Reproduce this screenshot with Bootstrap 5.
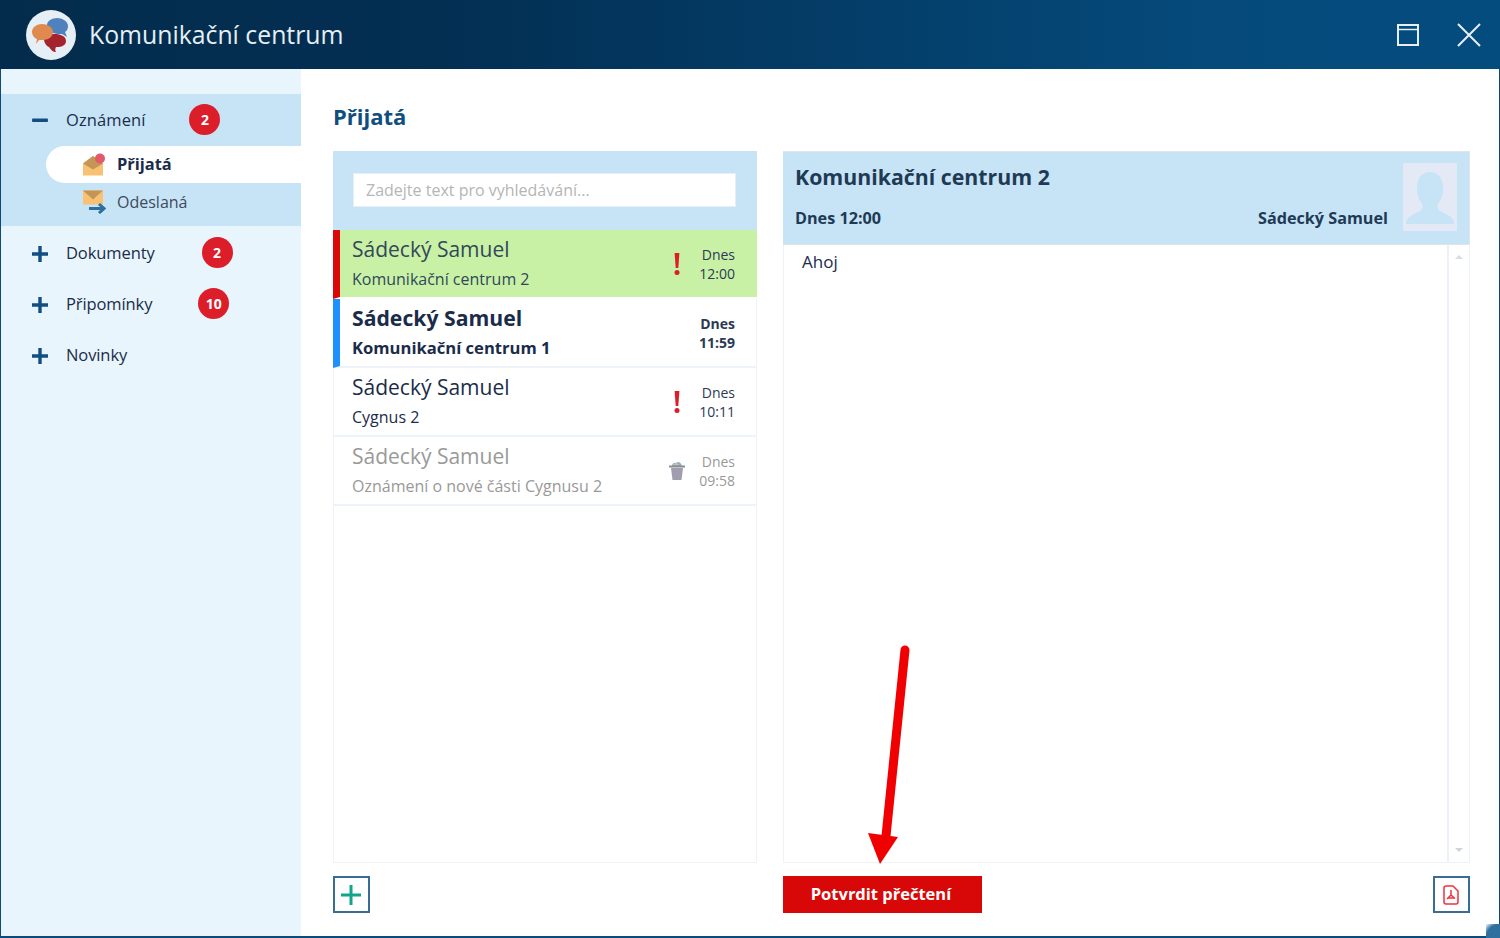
<!DOCTYPE html>
<html lang="cs">
<head>
<meta charset="utf-8">
<title>Komunikační centrum</title>
<link href="https://cdn.jsdelivr.net/npm/bootstrap@5.3.0/dist/css/bootstrap.min.css" rel="stylesheet">
<style>
html,body{height:938px;overflow:hidden;background:#fff}
body{font-family:"Open Sans",sans-serif;color:#1a2c4a;font-size:16px}
.kc-win{width:1500px;height:938px;position:relative;border:solid #0c4a78;border-width:0 1px 2px 1px}
.kc-head{height:69px;margin:0 -1px;background:linear-gradient(90deg,#032c4c 0%,#032f53 30%,#054a7b 80%,#054c7e 100%);padding-left:26px;padding-right:19px}
.kc-logo{width:50px;height:50px;border-radius:50%;background:#e6eff6;flex:none}
.kc-title{font-size:24.8px;margin-left:13px;line-height:1;color:#e6eff6}
.kc-ctl{display:block}
.kc-gap{margin-right:38px}
.kc-body{height:867px}
.kc-side{width:300px;background:#e9f5fc;padding-top:25px;flex:none}
.kc-sec{background:#c6e4f6;height:132px;padding-top:6px;margin-bottom:2px}
.kc-row{height:40px;margin-bottom:6px;padding-left:30px;font-size:16.5px;letter-spacing:.1px}
.kc-lbl{margin-left:17px}
.kc-pm{width:18px;flex:none;display:block}
.kc-badge{width:31px;height:31px;border-radius:50%;background:#dc1e2b;color:#fff;font-weight:700;font-size:14px;flex:none;margin-top:-2px;letter-spacing:0}
.kc-sub{height:37px;margin-left:45px;padding-left:36px;font-size:16px;color:#3f4a5e}
.kc-sub.kc-on{background:#fff;border-radius:19px 0 0 19px;color:#1a2c4a;font-weight:700;font-size:16.4px;line-height:24px}
.kc-sub.kc-on span{margin-top:-2px}
.kc-sub svg{flex:none;margin-right:11px}
.kc-plain{height:51px;padding-left:30px;font-size:16.5px;letter-spacing:-.1px}
.kc-b1{margin-left:44px}.kc-b2{margin-left:47px}.kc-b3{margin-left:46px}
.kc-main{padding:34px 30px 0 32px;min-width:0}
.kc-h{font-size:22px;font-weight:700;color:#0f4f80;line-height:26px;margin-bottom:22px}
.kc-cols{gap:26px}
.kc-left{width:424px;flex:none}
.kc-right{width:687px;flex:none}
.kc-panel{height:712px;border:1px solid #eef2f9;border-top:0}
.kc-search{height:79px;background:#c6e4f6;margin:0 -1px;padding:22px 21px 0 20px}
.kc-input{height:34px;width:100%;background:#fff;border:1px solid #e6eef6;border-radius:0;font-size:16px;padding:0 12px;box-shadow:none}
.kc-input::placeholder{color:#b5b5b5;opacity:1}
.kc-item{height:69px;border-bottom:2px solid #eef3fa;margin:0 -1px;padding:0 22px 0 19px;position:relative;border-left:7px solid transparent}
.kc-item.kc-g{background:#c8f1a6;border-left-color:#dc0808;border-bottom-color:#fff;padding-left:12px}
.kc-item.kc-n{border-left-color:#1e90ff;padding-left:12px}
.kc-item.kc-nb{border-left:0}
.kc-tx{margin-top:-3px}
.kc-nm{font-size:21px;line-height:26px;white-space:nowrap}
.kc-sb{font-size:16px;line-height:20px;margin-top:7px;white-space:nowrap}
.kc-item.kc-n .kc-nm{font-weight:700;font-size:21.2px}
.kc-item.kc-n .kc-sb{font-weight:700;font-size:16.6px}
.kc-item.kc-n .kc-tm{font-weight:700}
.kc-item.kc-g .kc-nm,.kc-item.kc-g .kc-sb{color:#33475a}
.kc-item.kc-d .kc-nm,.kc-item.kc-d .kc-sb,.kc-item.kc-d .kc-tm{color:#999}
.kc-tm{font-size:14px;line-height:19px;text-align:right;width:36px;flex:none;color:#2b3a55}
.kc-ic{width:30px;flex:none;margin-right:7px;text-align:center;display:flex;justify-content:center}
.kc-bar{height:37px;margin-top:13px}
.kc-sq{width:37px;height:37px;border:2px solid #3a6d96;border-radius:0;padding:0;background:#fff}
.kc-sq svg{margin-right:1px}
.kc-red{width:199px;height:37px;background:#d90808;color:#fff;font-weight:700;font-size:16.5px;border-radius:0;border:0;padding:0 3px 0 0}
.kc-red:hover{background:#d90808;color:#fff}
.kc-mh{height:94px;background:#c6e4f6;margin:0 -1px;padding:0 12px 0 12px;border:solid #dfe5ea;border-width:1px 1px 1px 0}
.kc-mt{font-size:21.3px;font-weight:700;color:#1f3a55;line-height:26px;margin-top:12px}
.kc-mi{font-size:16.2px;font-weight:700;line-height:20px;color:#1f3a55;margin-top:18px}
.kc-av{width:54px;height:68px;flex:none;background:#e4eaf5;margin-top:11px;margin-left:15px;display:block}
.kc-mb{height:617px}
.kc-txt{padding:5px 18px;font-size:17px;line-height:24px}
.kc-sc{width:22px;flex:none;border-left:2px solid #eef2f8;position:relative}
.kc-sc i{position:absolute;left:6px;border:4px solid transparent}
.kc-sc .kc-up{top:6px;border-bottom:4px solid #d8dde2}
.kc-sc .kc-dn{bottom:6px;border-top:4px solid #d0d5da}
.kc-arrow{position:absolute;left:859px;top:640px;display:block;pointer-events:none}
.kc-corner{position:absolute;right:-1px;bottom:-2px;width:14px;height:14px;background:radial-gradient(circle at 100% 100%,#2f6f9f 0,#2f6f9f 70%,rgba(47,111,159,0) 100%)}
</style>
</head>
<body>
<div class="kc-win">
  <header class="kc-head d-flex align-items-center">
    <div class="kc-logo d-flex align-items-center justify-content-center">
      <svg width="44" height="44" viewBox="0 0 44 44"><path d="M18 12c0-4 5-7 10-7s11 3 11 8c0 3-1 5-3 6l2 5-5-3c-7 1-15-3-15-9z" fill="#4f81bd"/><path d="M15 26c2-3 6-5 11-5s11 2 11 7c0 4-4 6-9 6l-1 0c-1 2-1 3 0 5-3 0-5-2-7-5-3-1-5-5-5-8z" fill="#a4232c"/><path d="M3 19c0-5 5-8 10-8s11 3 11 8c0 5-5 8-10 8h-4l-3 4 1-5c-3-1-5-4-5-7z" fill="#e08a50"/></svg>
    </div>
    <div class="kc-title flex-grow-1">Komunikační centrum</div>
    <svg class="kc-ctl kc-gap" width="22" height="22" viewBox="0 0 22 22" fill="none" stroke="#e6eff6" stroke-width="2"><rect x="1" y="1" width="20" height="20"/><path d="M1 5.500h20" stroke-width="1.500"/></svg>
    <svg class="kc-ctl" width="24" height="24" viewBox="0 0 24 24" fill="none" stroke="#e6eff6" stroke-width="2"><path d="M1 1l22 22M23 1L1 23"/></svg>
  </header>
  <div class="kc-body d-flex">
    <nav class="kc-side">
      <div class="kc-sec">
        <div class="kc-row d-flex align-items-center">
          <svg class="kc-pm" width="18" height="18" viewBox="0 0 18 18"><rect x="1" y="7.500" width="16" height="3.400" rx="1" fill="#124e80"/></svg>
          <span class="kc-lbl">Oznámení</span>
          <span class="kc-badge kc-b1 d-flex align-items-center justify-content-center">2</span>
        </div>
        <div class="kc-sub kc-on d-flex align-items-center">
          <svg width="24" height="24" viewBox="0 0 24 24"><path d="M1 10.500L11 3l10 7.500v12H1z" fill="#f8c173"/><path d="M1 10.500L11 3l10 7.500-10 6z" fill="#c49555"/><circle cx="18" cy="5.500" r="5" fill="#e3596b"/></svg>
          <span>Přijatá</span>
        </div>
        <div class="kc-sub d-flex align-items-center">
          <svg width="24" height="24" viewBox="0 0 24 24"><path d="M1 .5h20v14H1z" fill="#f8c173"/><path d="M1 .5h20l-10 9z" fill="#c49555"/><path d="M7 18.500h14" stroke="#2f6f9f" stroke-width="3"/><path d="M17 14l5 4.500-5 4.500" fill="none" stroke="#2f6f9f" stroke-width="3"/></svg>
          <span>Odeslaná</span>
        </div>
      </div>
      <div class="kc-plain d-flex align-items-center">
        <svg class="kc-pm" width="18" height="18" viewBox="0 0 18 18"><path d="M1 9h16M9 1v16" stroke="#124e80" stroke-width="3.400"/></svg>
        <span class="kc-lbl">Dokumenty</span>
        <span class="kc-badge kc-b2 d-flex align-items-center justify-content-center">2</span>
      </div>
      <div class="kc-plain d-flex align-items-center">
        <svg class="kc-pm" width="18" height="18" viewBox="0 0 18 18"><path d="M1 9h16M9 1v16" stroke="#124e80" stroke-width="3.400"/></svg>
        <span class="kc-lbl">Připomínky</span>
        <span class="kc-badge kc-b3 d-flex align-items-center justify-content-center">10</span>
      </div>
      <div class="kc-plain d-flex align-items-center">
        <svg class="kc-pm" width="18" height="18" viewBox="0 0 18 18"><path d="M1 9h16M9 1v16" stroke="#124e80" stroke-width="3.400"/></svg>
        <span class="kc-lbl">Novinky</span>
      </div>
    </nav>
    <main class="kc-main flex-grow-1">
      <h1 class="kc-h">Přijatá</h1>
      <div class="kc-cols d-flex">
        <section class="kc-left">
          <div class="kc-panel">
            <div class="kc-search"><input class="form-control kc-input" placeholder="Zadejte text pro vyhledávání..."></div>
            <div class="kc-item kc-g d-flex align-items-center">
              <div class="kc-tx flex-grow-1"><div class="kc-nm">Sádecký Samuel</div><div class="kc-sb">Komunikační centrum 2</div></div>
              <div class="kc-ic"><svg width="6" height="22" viewBox="0 0 6 22"><path d="M.6 0h4.800L4.300 15H1.700z" fill="#dc1e2b"/><circle cx="3" cy="19.500" r="2.500" fill="#dc1e2b"/></svg></div>
              <div class="kc-tm">Dnes<br>12:00</div>
            </div>
            <div class="kc-item kc-n d-flex align-items-center">
              <div class="kc-tx flex-grow-1"><div class="kc-nm">Sádecký Samuel</div><div class="kc-sb">Komunikační centrum 1</div></div>
              <div class="kc-tm">Dnes<br>11:59</div>
            </div>
            <div class="kc-item kc-nb d-flex align-items-center">
              <div class="kc-tx flex-grow-1"><div class="kc-nm">Sádecký Samuel</div><div class="kc-sb">Cygnus 2</div></div>
              <div class="kc-ic"><svg width="6" height="22" viewBox="0 0 6 22"><path d="M.6 0h4.800L4.300 15H1.700z" fill="#dc1e2b"/><circle cx="3" cy="19.500" r="2.500" fill="#dc1e2b"/></svg></div>
              <div class="kc-tm">Dnes<br>10:11</div>
            </div>
            <div class="kc-item kc-nb kc-d d-flex align-items-center">
              <div class="kc-tx flex-grow-1"><div class="kc-nm">Sádecký Samuel</div><div class="kc-sb">Oznámení o nové části Cygnusu 2</div></div>
              <div class="kc-ic"><svg width="16" height="20" viewBox="0 0 16 20"><path d="M3 5c0-3 3-4 4-3 2-2 5-1 6 3z" fill="#8fb0cc"/><path d="M5 3c1-1 4-1 5 1H5z" fill="#d8c48a"/><rect x="0" y="4.500" width="16" height="2" fill="#8a8a96"/><path d="M2 7h12l-1.500 12h-9z" fill="#a09eae"/></svg></div>
              <div class="kc-tm">Dnes<br>09:58</div>
            </div>
          </div>
          <div class="kc-bar">
            <button type="button" class="btn kc-sq d-flex align-items-center justify-content-center" aria-label="Přidat"><svg width="22" height="22" viewBox="0 0 22 22"><path d="M1 11h20M11 1v20" stroke="#14a48c" stroke-width="3"/></svg></button>
          </div>
        </section>
        <section class="kc-right">
          <div class="kc-panel">
            <div class="kc-mh d-flex">
              <div class="flex-grow-1">
                <div class="kc-mt">Komunikační centrum 2</div>
                <div class="kc-mi d-flex justify-content-between"><span>Dnes 12:00</span><span>Sádecký Samuel</span></div>
              </div>
              <svg class="kc-av" width="54" height="68" viewBox="0 0 54 68"><path d="M27 9c9 0 13 7 13 17 0 7-3 12-5 15-2 4 0 6 4 8 6 3 11 5 12 10v2H3v-2c1-5 6-7 12-10 4-2 6-4 4-8-2-3-5-8-5-15C14 16 18 9 27 9z" fill="#c6e4f6"/></svg>
            </div>
            <div class="kc-mb d-flex">
              <div class="kc-txt flex-grow-1">Ahoj</div>
              <div class="kc-sc"><i class="kc-up"></i><i class="kc-dn"></i></div>
            </div>
          </div>
          <div class="kc-bar d-flex justify-content-between">
            <button type="button" class="btn kc-red">Potvrdit přečtení</button>
            <button type="button" class="btn kc-sq d-flex align-items-center justify-content-center" aria-label="PDF"><svg width="16" height="20" viewBox="0 0 16 20" fill="none" stroke="#f0323c" stroke-width="1.500"><path d="M3 1h7l5 5v11a2 2 0 0 1-2 2H3a2 2 0 0 1-2-2V3a2 2 0 0 1 2-2z"/><path d="M8 5v5l-4 4M8 10l4 3.500M5 13h6" stroke-width="1.500"/></svg></button>
          </div>
        </section>
      </div>
    </main>
  </div>
  <svg class="kc-arrow" width="60" height="230" viewBox="0 0 60 230"><path d="M45 10L26 196" stroke="#f00000" stroke-width="9" stroke-linecap="round" fill="none"/><path d="M8 193l30 4-18 27z" fill="#f00000"/></svg>
  <div class="kc-corner"></div>
</div>
<script src="https://cdn.jsdelivr.net/npm/bootstrap@5.3.0/dist/js/bootstrap.bundle.min.js"></script>
</body>
</html>
